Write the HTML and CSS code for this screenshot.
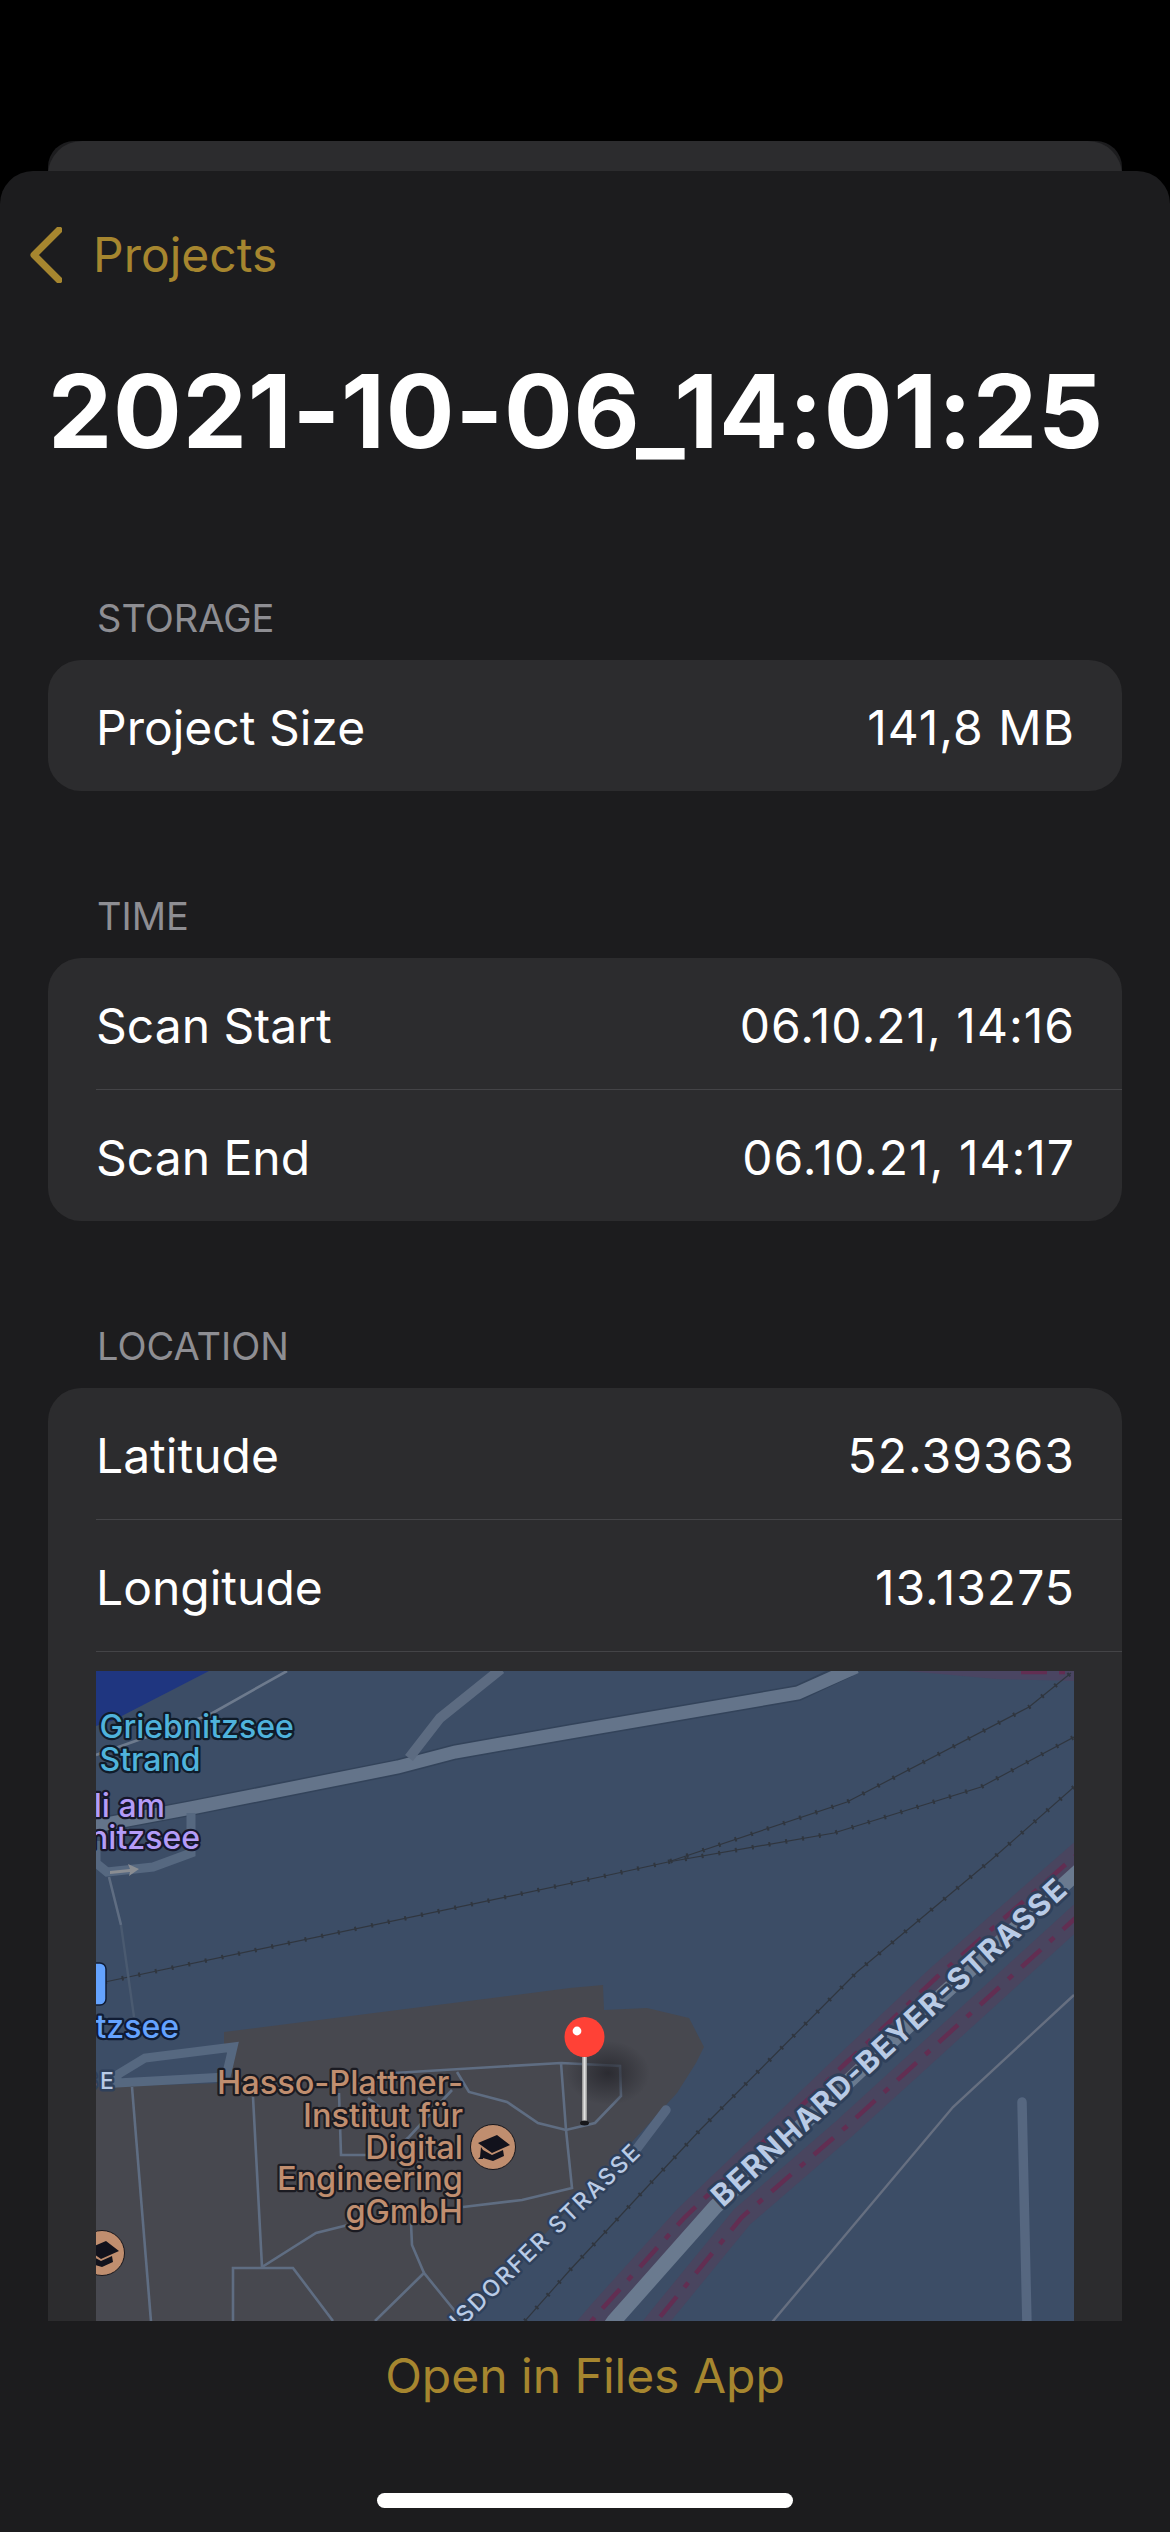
FILE: index.html
```html
<!DOCTYPE html>
<html lang="en">
<head>
<meta charset="utf-8">
<title>2021-10-06_14:01:25</title>
<link rel="stylesheet" href="styles.css">
</head>
<body>
<div class="back-card"><div class="back-card-inner"></div></div>
<div class="sheet">
  <nav class="nav">
    <svg class="chevron" width="32" height="56" viewBox="0 0 32 56"><path d="M29 3 L4 28 L29 53" /></svg>
    <span class="nav-label">Projects</span>
  </nav>
  <h1 class="title">2021-10-06_14:01:25</h1>
  <main class="content">
    <section class="section">
      <h2 class="section-label">STORAGE</h2>
      <div class="card">
        <div class="row"><span>Project Size</span><span class="value">141,8 MB</span></div>
      </div>
    </section>
    <section class="section">
      <h2 class="section-label">TIME</h2>
      <div class="card">
        <div class="row row-sep"><span>Scan Start</span><span class="value">06.10.21, 14:16</span></div>
        <div class="row"><span>Scan End</span><span class="value">06.10.21, 14:17</span></div>
      </div>
    </section>
    <section class="section">
      <h2 class="section-label">LOCATION</h2>
      <div class="card">
        <div class="row row-sep"><span>Latitude</span><span class="value">52.39363</span></div>
        <div class="row row-sep"><span>Longitude</span><span class="value">13.13275</span></div>
        <div class="map-wrap">
          <svg class="map" width="978" height="700" viewBox="0 0 978 700">
            <defs>
              <radialGradient id="pinShadow"><stop offset="0" stop-color="#26262c" stop-opacity=".85"/><stop offset="1" stop-color="#26262c" stop-opacity="0"/></radialGradient>
              <linearGradient id="stick" x1="0" x2="1" y1="0" y2="0"><stop offset="0" stop-color="#8a8a8a"/><stop offset=".5" stop-color="#e2e2e2"/><stop offset="1" stop-color="#8f8f8f"/></linearGradient>
            </defs>
            <rect class="water" width="978" height="700"/>
            <polygon class="lake" points="0,0 113,0 18,49 0,55"/>
            <polygon class="land" points="128,361 474,317 507,314 508,339 551,337 593,347 608,376 600,392 581,422 550,456 367,650 367,700 0,700 0,416 128,412"/>

            <polygon class="halo-fill" points="811,0 978,0 978,10 900,8"/>
            <path class="dash-line" d="M925 1 L975 1"/>

            <path class="rail" d="M9 311 L504 206 L572 191 L751 131 L933 36 L975 2"/>
            <path class="rail-tick" d="M9 311 L504 206 L572 191 L751 131 L933 36 L975 2"/>
            <path class="rail" d="M572 191 L738 162 L885 116 L978 66"/>
            <path class="rail-tick" d="M572 191 L738 162 L885 116 L978 66"/>
            <path class="rail" d="M978 116 L895 189 L761 301 L604 459 L474 599 L420 660"/>
            <path class="rail-tick" d="M978 116 L895 189 L761 301 L604 459 L474 599 L420 660"/>

            <path class="road-casing wide" d="M4 154 L95 137 L302 96 L359 81 L474 61 L702 22 L753 -2"/>
            <path class="road-main wide" d="M-6 156 L95 137 L302 96 L359 81 L474 61 L702 22 L760 -4"/>
            <path class="road-branch" d="M313 87 L344 47 L405 -2"/>
            <path class="road-loop" d="M95 142 L95 182 L57 196 L11 201 L0 192 L0 170"/>
            <path class="road-thin light" d="M191 0 L113 44 L0 84"/>
            <path class="road-thin" d="M13 206 L25 254"/>
            <path class="road-faint" d="M25 254 L38 346"/>
            <path class="road-loop fillwater" d="M21 404 L49 387 L137 376 L130 406 L21 412 Z"/>

            <path class="road-thin" d="M36 416 L59 700"/>
            <path class="road-thin" d="M157 426 L166 596 L220 562 L252 554"/>
            <path class="road-thin" d="M137 650 L137 597 L197 597 L237 650"/>
            <path class="road-thin" d="M279 650 L328 602 L367 650"/>
            <path class="road-thin" d="M328 602 L316 574 L315 552"/>
            <path class="road-thin" d="M367 536 L426 529 L476 517 L470 459 L465 392"/>
            <path class="road-thin" d="M298 402 L465 392 L524 395 L525 425 L499 452 L470 459 L442 452 L411 431 L373 421 L361 401"/>
            <path class="road-thin" d="M356 419 L313 466 L300 476"/>
            <path class="road-thin" d="M243 422 L245 484 L271 484"/>
            <path class="road-thin" d="M272 427 L290 441"/>

            <ellipse cx="512" cy="402" rx="42" ry="32" fill="url(#pinShadow)"/>

            <path class="road-stub" d="M570 439 L530 492"/>
            <path class="road-thin grey" d="M635 700 L857 436 L978 324"/>
            <path class="road-stub" d="M926 431 L932 700"/>

            <path class="halo" d="M470 680 L505 639 L589 546 L750 392 L841 306 L985 180"/>
            <path class="halo" d="M530 690 L564 646 L646 546 L750 456 L841 373 L985 242"/>
            <path class="dash-line" d="M470 680 L505 639 L589 546 L750 392 L841 306 L985 180"/>
            <path class="dash-line" d="M530 690 L564 646 L646 546 L750 456 L841 373 L985 242"/>
            <path class="road-big" d="M490 690 L518 650 L619 536 L790 375 L985 198"/>

            <text class="lbl lbl-beach" x="3.5" y="67">Griebnitzsee</text>
            <text class="lbl lbl-beach" x="3.5" y="100">Strand</text>
            <text class="lbl lbl-purple end" x="69" y="146">li am</text>
            <text class="lbl lbl-purple end" x="104" y="178">nitzsee</text>
            <path class="arrow" d="M14 200 L34 198 L32 193 L43 198 L33 205 L34 201 L14 203 Z"/>
            <rect class="badge" x="-10" y="292" width="20" height="42" rx="6"/>
            <text class="lbl lbl-blue end" x="83" y="367">tzsee</text>
            <text class="street-sm street-se end" x="21" y="418">SE</text>

            <text class="lbl lbl-poi end" x="367" y="423">Hasso-Plattner-</text>
            <text class="lbl lbl-poi end" x="367" y="456">Institut für</text>
            <text class="lbl lbl-poi end" x="367" y="488">Digital</text>
            <text class="lbl lbl-poi end" x="367" y="519">Engineering</text>
            <text class="lbl lbl-poi end" x="367" y="552">gGmbH</text>

            <g transform="translate(397 476)">
              <circle class="poi-disc" r="22.5"/>
              <path class="poi-cap" d="M-15 -4 L4 -12 L17 -2 L-1 6 Z M-12 0 L-13 10 L-15 12 L-10 12 L-10 11 L0 14 L11 9 L10 3 L-1 8 L-10 3 Z"/>
            </g>
            <g transform="translate(6 582)">
              <circle class="poi-disc" r="22.5"/>
              <path class="poi-cap" d="M-15 -4 L4 -12 L17 -2 L-1 6 Z M-12 0 L-13 10 L-15 12 L-10 12 L-10 11 L0 14 L11 9 L10 3 L-1 8 L-10 3 Z"/>
            </g>

            <text class="street-sm end" transform="translate(547 482) rotate(-44)">ISDORFER STRASSE</text>
            <text class="street-lg" transform="translate(627 537) rotate(-42.4)" textLength="468" lengthAdjust="spacing">BERNHARD-BEYER-STRASSE</text>

            <rect x="486" y="386" width="5" height="66" fill="url(#stick)"/>
            <ellipse cx="488.5" cy="452" rx="4.5" ry="2.5" fill="#17171b"/>
            <circle class="pin-head" cx="488.5" cy="366" r="20"/>
            <circle cx="481" cy="360" r="4.4" fill="#fff"/>
          </svg>
        </div>
      </div>
    </section>
  </main>
  <footer class="footer">
    <span class="footer-link">Open in Files App</span>
    <div class="home-bar"></div>
  </footer>
</div>
</body>
</html>
```
FILE: styles.css
```css
* { box-sizing: border-box; }
html, body { margin: 0; padding: 0; }
body {
  width: 1170px;
  height: 2532px;
  background: #000;
  overflow: hidden;
  padding-top: 141px;
  font-family: Inter, "Noto Sans", sans-serif;
  color: #fff;
}
.back-card {
  height: 30px;
  margin: 0 48px;
  background: #1c1c1e;
  border-radius: 26px 26px 0 0;
  overflow: hidden;
}
.back-card-inner {
  height: 60px;
  background: #2c2c2e;
  border-radius: 34px 34px 0 0;
}
.sheet {
  height: 2361px;
  background: #1c1c1e;
  border-radius: 33px 33px 0 0;
  display: flex;
  flex-direction: column;
}
.nav {
  display: flex;
  align-items: center;
  gap: 31px;
  padding: 56px 0 0 30px;
  height: 112px;
}
.chevron { flex: none; }
.chevron path { fill: none; stroke: #a6862f; stroke-width: 7; stroke-linecap: round; stroke-linejoin: round; }
.nav-label { font-size: 48px; color: #a6862f; line-height: 56px; }
.title {
  margin: 68px 0 0;
  padding-right: 18px;
  height: 120px;
  line-height: 120px;
  font-size: 102px;
  font-weight: 700;
  letter-spacing: 0.8px;
  text-align: center;
  white-space: nowrap;
}
.content {
  flex: 1;
  min-height: 0;
  overflow: hidden;
  padding: 122px 48px 0;
}
.section { margin-bottom: 100px; }
.section-label {
  margin: 0;
  padding: 2px 0 19px 49px;
  font-size: 38px;
  line-height: 46px;
  font-weight: 400;
  color: #8e8e93;
}
.card {
  background: #2c2c2e;
  border-radius: 33px;
  padding-left: 48px;
}
.row {
  height: 131px;
  padding: 3px 48px 0 0;
  display: flex;
  align-items: center;
  justify-content: space-between;
  font-size: 48px;
}
.value { letter-spacing: 1px; margin-right: -1px; }
.row-sep { height: 132px; border-bottom: 1px solid #444447; }
.map-wrap { padding: 19px 48px 0 0; }
.map { display: block; }
.water { fill: #3c4d66; }
.lake { fill: #1f3680; }
.land { fill: #47484f; }
.halo-fill { fill: #4a4562; }
.rail { fill: none; stroke: #30363f; stroke-width: 1.2; }
.rail-tick { fill: none; stroke: #30363f; stroke-width: 4.5; stroke-dasharray: 2 15; }
.road-casing, .road-main, .road-branch, .road-loop, .road-thin, .road-faint, .road-stub, .road-big, .halo, .dash-line { fill: none; }
.road-casing { stroke: #33435a; stroke-width: 16; }
.road-main { stroke: #64748a; stroke-width: 13; }
.road-branch { stroke: #5c6b81; stroke-width: 10; }
.road-loop { stroke: #566880; stroke-width: 9; }
.fillwater { fill: #3c4d66; }
.road-thin { stroke: #5f6d82; stroke-width: 2.6; }
.road-thin.light { stroke: #6d7a8d; }
.road-thin.grey { stroke: #666f80; stroke-width: 2.4; }
.road-faint { stroke: #4a5a70; stroke-width: 2.4; }
.road-stub { stroke: #566780; stroke-width: 9.5; stroke-linecap: round; }
.road-big { stroke: #6a7a8f; stroke-width: 15; }
.halo { stroke: #49455f; stroke-width: 22; }
.dash-line { stroke: #622e52; stroke-width: 4.5; stroke-dasharray: 26 12 6 12; }
.lbl {
  font-family: Inter, "Noto Sans", sans-serif;
  font-size: 32px;
  font-weight: 500;
  paint-order: stroke;
  stroke-width: 4.5px;
  stroke-linejoin: round;
}
.end { text-anchor: end; }
.lbl-beach { fill: #4fb3dc; stroke: #101c2a; }
.lbl-purple { fill: #b49cf8; stroke: #17172b; }
.lbl-blue { fill: #64a3ff; stroke: #101c34; }
.lbl-poi { fill: #c08e6f; stroke: #1b1b22; font-size: 32.5px; }
.badge { fill: #64a3ff; stroke: #101c34; stroke-width: 1.5; }
.arrow { fill: #8a8d92; }
.poi-disc { fill: #c08e6f; stroke: #17171d; stroke-width: 1; }
.poi-cap { fill: #12121c; }
.street-sm {
  font-family: Inter, "Noto Sans", sans-serif;
  font-size: 23px;
  font-weight: 500;
  letter-spacing: 2px;
  fill: #b9cbe6;
  stroke: #2f405a;
  stroke-width: 5px;
  paint-order: stroke;
  stroke-linejoin: round;
}
.street-se { letter-spacing: 3px; }
.street-lg {
  font-family: Inter, "Noto Sans", sans-serif;
  font-size: 30px;
  font-weight: 700;
  fill: #b9cbe6;
  stroke: #2f405a;
  stroke-width: 6px;
  paint-order: stroke;
  stroke-linejoin: round;
}
.pin-head { fill: #ff4136; }
.footer {
  flex: none;
  height: 211px;
  background: #1c1c1e;
  display: flex;
  flex-direction: column;
  align-items: center;
  padding-top: 26px;
}
.footer-link { font-size: 48px; line-height: 58px; color: #a6862f; }
.home-bar {
  width: 416px;
  height: 15px;
  margin-top: 88px;
  border-radius: 8px;
  background: #fff;
}
```
